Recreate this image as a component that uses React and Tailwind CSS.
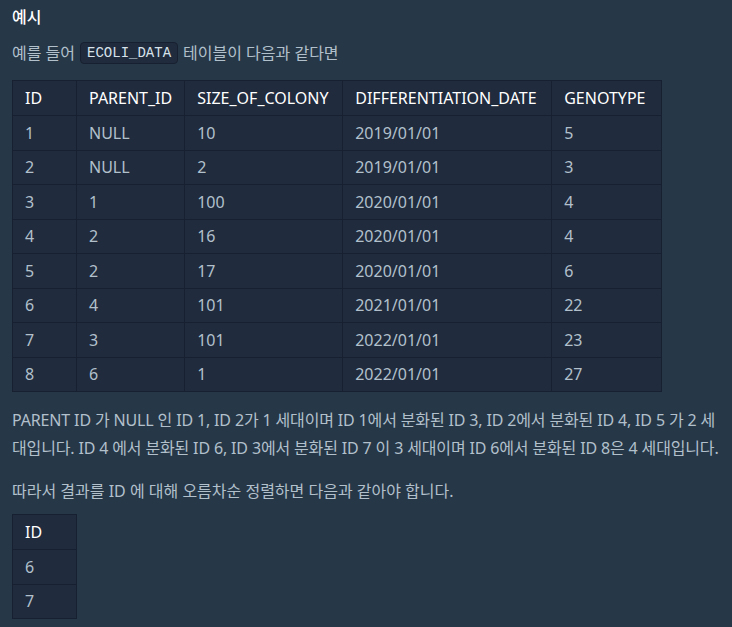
import React from "react";

const rows = [
  ["1", "NULL", "10", "2019/01/01", "5"],
  ["2", "NULL", "2", "2019/01/01", "3"],
  ["3", "1", "100", "2020/01/01", "4"],
  ["4", "2", "16", "2020/01/01", "4"],
  ["5", "2", "17", "2020/01/01", "6"],
  ["6", "4", "101", "2021/01/01", "22"],
  ["7", "3", "101", "2022/01/01", "23"],
  ["8", "6", "1", "2022/01/01", "27"],
];

const headers = ["ID", "PARENT_ID", "SIZE_OF_COLONY", "DIFFERENTIATION_DATE", "GENOTYPE"];
const widths = ["w-[64px]", "w-[108px]", "w-[158px]", "w-[209px]", "w-[110px]"];

const App = () => {
  return (
    <div
      className="min-h-[627px] w-[732px] bg-[#263747] pl-3 pr-[7px] pt-[5px] text-[16px] text-[#b2c0cc]"
      style={{ fontFamily: '"Noto Sans", "Noto Sans CJK KR", sans-serif' }}
    >
      <h5 className="h-[24px] leading-[24px] font-medium text-white">예시</h5>

      <p className="mt-[12px] flex h-[24px] items-center leading-[24px]">
        예를 들어
        <code className="mx-[5px] rounded-[4px] border border-[#172030] bg-[#202b3d] px-[6px] text-[14px] leading-[20px] text-[#d7e2eb] font-['Liberation_Mono','DejaVu_Sans_Mono',monospace]">
          ECOLI_DATA
        </code>
        테이블이 다음과 같다면
      </p>

      <table className="mt-[15px] border-collapse bg-[#202b3d]">
        <thead>
          <tr>
            {headers.map((h, i) => (
              <th
                key={h}
                className={`${widths[i]} h-[35px] border border-[#172030] px-[12px] text-left font-normal text-white`}
              >
                {h}
              </th>
            ))}
          </tr>
        </thead>
        <tbody>
          {rows.map((r) => (
            <tr key={r[0]}>
              {r.map((c, i) => (
                <td key={i} className="h-[34.5px] border border-[#172030] px-[12px]">
                  {c}
                </td>
              ))}
            </tr>
          ))}
        </tbody>
      </table>

      <p className="mt-[14px] break-all tracking-[-0.15px] leading-[28px]">
        PARENT ID 가 NULL 인 ID 1, ID 2가 1 세대이며 ID 1에서 분화된 ID 3, ID 2에서 분화된 ID 4, ID 5 가 2 세대입니다. ID 4 에서 분화된 ID 6, ID 3에서 분화된 ID 7 이 3 세대이며 ID 6에서 분화된 ID 8은 4 세대입니다.
      </p>

      <p className="mt-[15px] leading-[28px]">
        따라서 결과를 ID 에 대해 오름차순 정렬하면 다음과 같아야 합니다.
      </p>

      <table className="mt-[9px] border-collapse bg-[#202b3d]">
        <thead>
          <tr>
            <th className="h-[35px] w-[64px] border border-[#172030] px-[12px] text-left font-normal text-white">
              ID
            </th>
          </tr>
        </thead>
        <tbody>
          {["6", "7"].map((v) => (
            <tr key={v}>
              <td className="h-[34.5px] border border-[#172030] px-[12px]">{v}</td>
            </tr>
          ))}
        </tbody>
      </table>
    </div>
  );
};

export default App;
